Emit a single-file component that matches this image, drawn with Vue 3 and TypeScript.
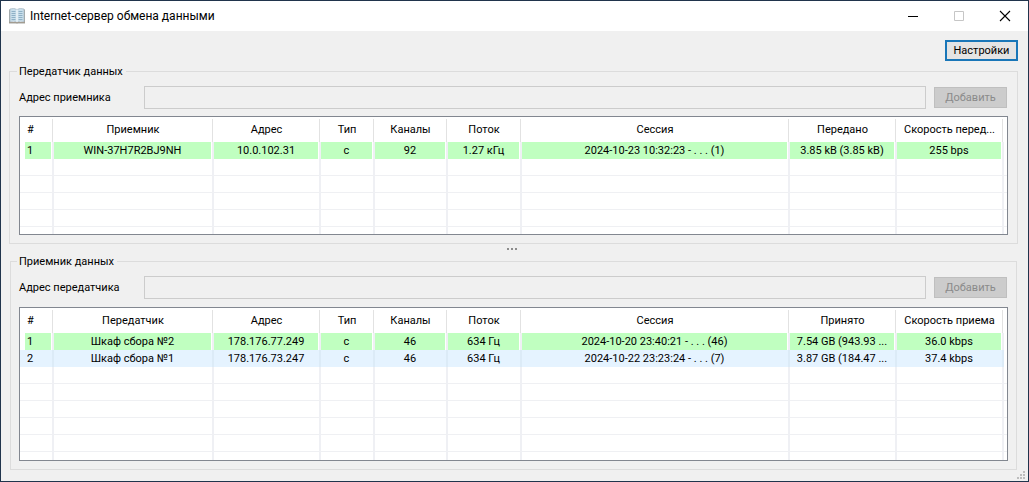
<script setup lang="ts">
interface Group {
  id: string
  title: string
  label: string
  headers: string[]
  rows: { tone: string; cells: string[] }[]
  blanks: number
}

const groups: Group[] = [
  {
    id: 'sender',
    title: 'Передатчик данных',
    label: 'Адрес приемника',
    headers: ['#', 'Приемник', 'Адрес', 'Тип', 'Каналы', 'Поток', 'Сессия', 'Передано', 'Скорость перед...'],
    rows: [
      {
        tone: 'active',
        cells: ['1', 'WIN-37H7R2BJ9NH', '10.0.102.31', 'c', '92', '1.27 кГц', '2024-10-23 10:32:23 - . . . (1)', '3.85 kB (3.85 kB)', '255 bps'],
      },
    ],
    blanks: 30,
  },
  {
    id: 'receiver',
    title: 'Приемник данных',
    label: 'Адрес передатчика',
    headers: ['#', 'Передатчик', 'Адрес', 'Тип', 'Каналы', 'Поток', 'Сессия', 'Принято', 'Скорость приема'],
    rows: [
      {
        tone: 'active',
        cells: ['1', 'Шкаф сбора №2', '178.176.77.249', 'c', '46', '634 Гц', '2024-10-20 23:40:21 - . . . (46)', '7.54 GB (943.93 ...', '36.0 kbps'],
      },
      {
        tone: 'selected',
        cells: ['2', 'Шкаф сбора №1', '178.176.73.247', 'c', '46', '634 Гц', '2024-10-22 23:23:24 - . . . (7)', '3.87 GB (184.47 ...', '37.4 kbps'],
      },
    ],
    blanks: 30,
  },
]
const columns = ['num', 'name', 'addr', 'type', 'chan', 'flow', 'session', 'total', 'speed', 'rest']
</script>

<template>
  <div class="window">
    <header class="titlebar">
      <svg class="app-icon" width="16" height="16" viewBox="0 0 16 16" aria-hidden="true">
        <path d="M0 2L1 1V14H15V1L16 2V15.500H0Z" fill="#a3a6a3" />
        <path d="M1 1Q5-.4 8 1.500Q11-.4 15 1V13.500Q11 12.600 8 14Q5 12.600 1 13.500Z" fill="#c9dfeb" stroke="#a3b5c0" stroke-width=".7" />
        <path d="M2.500 3.500H6.500M2.500 5.500H6.500M2.500 7.500H6.500M2.500 9.500H6.500M2.500 11.500H6.500M9.500 3.500H13.500M9.500 5.500H13.500M9.500 7.500H13.500M9.500 9.500H13.500M9.500 11.500H13.500" stroke="#8fb1c6" />
        <path d="M8 1.500V14" stroke="#f4f8fa" stroke-width="1.200" />
        <path d="M0 14.500H7L8 15L9 14.500H16" stroke="#a39c90" fill="none" />
      </svg>
      <h1>Internet-сервер обмена данными</h1>
      <div class="controls">
        <button type="button" aria-label="Свернуть">
          <svg width="12" height="12" viewBox="0 0 12 12"><path d="M1 6.500H11" stroke="#000" /></svg>
        </button>
        <button type="button" aria-label="Развернуть" disabled>
          <svg width="12" height="12" viewBox="0 0 12 12"><path d="M1.500 1.500H10.500V10.500H1.500Z" fill="none" stroke="#c6c6c6" /></svg>
        </button>
        <button type="button" aria-label="Закрыть">
          <svg width="12" height="12" viewBox="0 0 12 12"><path d="M1 1L11 11M11 1L1 11" stroke="#000" stroke-width="1.100" /></svg>
        </button>
      </div>
    </header>

    <main class="body">
      <div class="toolbar"><button type="button" class="settings">Настройки</button></div>

      <template v-for="(g, gi) in groups" :key="g.id">
        <div v-if="gi > 0" class="splitter"><i></i><i></i><i></i></div>
        <fieldset class="group" :class="g.id">
          <legend>{{ g.title }}</legend>
          <div class="form">
            <label :for="g.id + '-address'">{{ g.label }}</label>
            <input :id="g.id + '-address'" type="text" disabled />
            <button type="button" class="add" disabled>Добавить</button>
          </div>
          <div class="list">
            <table>
              <colgroup>
                <col v-for="c in columns" :key="c" :class="c" />
              </colgroup>
              <thead>
                <tr>
                  <th v-for="h in g.headers" :key="h" scope="col"><div>{{ h }}</div></th>
                  <td></td>
                </tr>
              </thead>
              <tbody>
                <tr v-for="r in g.rows" :key="r.cells[0]" :class="r.tone">
                  <td v-for="(c, i) in r.cells" :key="i"><div>{{ c }}</div></td>
                  <td></td>
                </tr>
                <tr v-for="n in g.blanks" :key="'blank' + n" class="blank">
                  <td v-for="c in columns" :key="c"></td>
                </tr>
              </tbody>
            </table>
          </div>
        </fieldset>
      </template>
    </main>

    <svg class="grip" width="9" height="9" viewBox="0 0 9 9" aria-hidden="true">
      <path d="M6 0H8V2H6ZM3 3H5V5H3ZM6 3H8V5H6ZM0 6H2V8H0ZM3 6H5V8H3ZM6 6H8V8H6Z" fill="#bdbdbd" />
    </svg>
  </div>
</template>

<style>
body {
  margin: 0;
}
</style>

<style scoped>
.window {
  position: relative;
  box-sizing: border-box;
  display: flex;
  flex-direction: column;
  height: 100vh;
  border: 1px solid #20344c;
  background: #f0f0f0;
  color: #000;
  font: 11px/13px Roboto, "Liberation Sans", sans-serif;
}
button,
input {
  box-sizing: border-box;
  margin: 0;
  padding: 0;
  border-radius: 0;
  font: inherit;
}
.titlebar {
  display: flex;
  align-items: center;
  height: 30px;
  padding-left: 8px;
  background: #fff;
}
.app-icon {
  margin-right: 5px;
}
h1 {
  flex: 1;
  margin: 0;
  font: 12px/16px Roboto, "Liberation Sans", sans-serif;
}
.controls {
  display: flex;
  height: 100%;
}
.controls button {
  display: flex;
  align-items: center;
  justify-content: center;
  width: 46px;
  border: 0;
  background: transparent;
}
.body {
  flex: 1;
  min-height: 0;
  display: flex;
  flex-direction: column;
  padding: 9px 10px 11px 8px;
}
.toolbar {
  display: flex;
  justify-content: flex-end;
  margin-bottom: 4px;
}
.settings {
  width: 73px;
  height: 21px;
  border: 2px solid #1976b8;
  background: #e4e4e4;
  color: #000;
}
.group {
  box-sizing: border-box;
  display: flex;
  flex-direction: column;
  gap: 7px;
  min-width: 0;
  min-height: 0;
  margin: 0;
  padding: 8px 9px;
  border: 1px solid #dcdcdc;
}
.sender {
  flex: 179 1 179px;
}
.receiver {
  flex: 215 1 215px;
  gap: 8px;
  margin: 0 1px;
  padding: 8px;
}
legend {
  padding: 0 3px 0 2px;
  margin-left: -2px;
}
.form {
  display: flex;
  align-items: center;
  padding-right: 1px;
}
.form label {
  width: 125px;
}
.form input {
  flex: 1;
  min-width: 0;
  height: 23px;
  margin-right: 8px;
  border: 1px solid #ccc;
  background: #f0f0f0;
}
.add {
  width: 73px;
  height: 21px;
  border: 1px solid #bfbfbf;
  background: #ccc;
  color: #8a8a8a;
}
.list {
  flex: 1;
  min-height: 0;
  overflow: hidden;
  border: 1px solid #828790;
  background: #fff;
}
.splitter {
  box-sizing: border-box;
  display: flex;
  flex: none;
  justify-content: center;
  gap: 2px;
  height: 11px;
  padding: 4px 4px 0 0;
}
.splitter i {
  width: 2px;
  height: 2px;
  background: #8c8c8c;
}
table {
  width: 100%;
  table-layout: fixed;
  border-collapse: separate;
  border-spacing: 0;
}
.num { width: 34px; }
.name { width: 160px; }
.addr { width: 107px; }
.type { width: 54px; }
.chan { width: 73px; }
.flow { width: 74px; }
.total { width: 107px; }
.speed { width: 107px; }
.rest { width: 3px; }
th,
td {
  box-sizing: border-box;
  padding: 0;
  font-weight: 400;
  text-align: center;
}
th {
  height: 25px;
  padding: 2px 1px 0 0;
}
th div {
  height: 23px;
  padding: 0 6px;
  box-sizing: border-box;
  border-right: 1px solid #e2e2e2;
  line-height: 21px;
  white-space: nowrap;
  overflow: hidden;
  text-overflow: ellipsis;
}
tbody td {
  height: 17px;
  border-right: 2px solid #eff0f4;
}
tbody td:last-child {
  border-right: 0;
}
tbody td div {
  height: 17px;
  margin-right: 1px;
  line-height: 17px;
  white-space: nowrap;
  overflow: hidden;
}
th:first-child div {
  padding-left: 7px;
  text-align: left;
}
tbody td:first-child div {
  margin-left: 5px;
  padding-left: 2px;
  text-align: left;
}
.active td div {
  background: #c0ffc0;
}
.selected td:not(:last-child) {
  background: #e5f3ff;
  border-right-color: #dcebf7;
}
.blank td {
  border-bottom: 1px solid #eff0f3;
}
.grip {
  position: absolute;
  right: 2px;
  bottom: 1px;
}
</style>
